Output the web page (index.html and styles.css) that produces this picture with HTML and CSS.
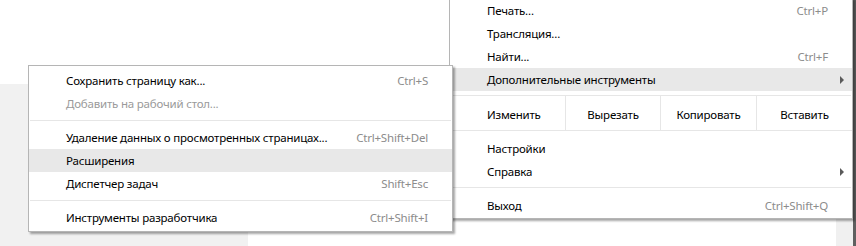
FILE: index.html
```html
<!DOCTYPE html>
<html lang="ru">
<head>
    <meta charset="UTF-8">
    <title>Меню</title>
    <link rel="stylesheet" href="styles.css">
</head>
<body>
<div class="page">
    <div class="side-panel"></div>
    <div class="content"></div>
    <div class="scroll-track"></div>
    <div class="scroll-edge"></div>
</div>

<div class="menu main-menu">
    <div class="item"><span class="label">Печать...</span><span class="shortcut">Ctrl+P</span></div>
    <div class="item"><span class="label">Трансляция...</span></div>
    <div class="item"><span class="label">Найти...</span><span class="shortcut">Ctrl+F</span></div>
    <div class="item active has-sub"><span class="label">Дополнительные инструменты</span><span class="arrow"></span></div>
    <div class="divider"></div>
    <div class="edit-row">
        <div class="edit-cell first">Изменить</div>
        <div class="edit-cell">Вырезать</div>
        <div class="edit-cell">Копировать</div>
        <div class="edit-cell">Вставить</div>
    </div>
    <div class="item"><span class="label">Настройки</span></div>
    <div class="item has-sub"><span class="label">Справка</span><span class="arrow"></span></div>
    <div class="divider"></div>
    <div class="item"><span class="label">Выход</span><span class="shortcut">Ctrl+Shift+Q</span></div>
</div>

<div class="menu sub-menu">
    <div class="item"><span class="label">Сохранить страницу как...</span><span class="shortcut">Ctrl+S</span></div>
    <div class="item disabled"><span class="label">Добавить на рабочий стол...</span></div>
    <div class="divider"></div>
    <div class="item"><span class="label">Удаление данных о просмотренных страницах...</span><span class="shortcut">Ctrl+Shift+Del</span></div>
    <div class="item active"><span class="label">Расширения</span></div>
    <div class="item"><span class="label">Диспетчер задач</span><span class="shortcut">Shift+Esc</span></div>
    <div class="divider"></div>
    <div class="item"><span class="label">Инструменты разработчика</span><span class="shortcut">Ctrl+Shift+I</span></div>
</div>
</body>
</html>
```

FILE: styles.css
```css
body {
    margin: 0;
    padding: 0;
    background-color: #fff;
    font-family: 'Noto Sans', 'Open Sans', sans-serif;
    font-size: 11.5px;
    letter-spacing: -0.2px;
    color: #000;
    overflow: hidden;
}

.page {
    display: grid;
    grid-template-columns: 248px 1fr 17px 3px;
    height: 246px;
}

.side-panel {
    margin-top: 84px;
    background-color: #f1f1f1;
}

.scroll-track {
    margin-top: 200px;
    background-color: #f0f0f0;
}

.scroll-edge {
    background-color: #5f5f5f;
}

.menu {
    position: absolute;
    background-color: #fff;
    border: 1px solid #b5b5b5;
    box-shadow: 2px 2px 2px rgba(0,0,0,0.35);
}

.main-menu {
    left: 449px;
    top: -2px;
    width: 402px;
    padding-bottom: 1px;
}

.sub-menu {
    left: 28px;
    top: 65px;
    width: 423px;
    padding: 3px 0 2px;
    z-index: 2;
}

.item {
    display: flex;
    align-items: center;
    height: 23px;
    padding: 0 24px 0 37px;
}

.item .label {
    flex: 1;
    white-space: nowrap;
}

.item .shortcut {
    color: #8c8c8c;
    white-space: nowrap;
}

.item.active {
    background-color: #e8e8e8;
}

.item.disabled .label {
    color: #9a9a9a;
}

.has-sub {
    position: relative;
}

.arrow {
    position: absolute;
    right: 8px;
    top: 8px;
    width: 0;
    height: 0;
    border-top: 4px solid transparent;
    border-bottom: 4px solid transparent;
    border-left: 4px solid #5a5a5a;
}

.divider {
    height: 1px;
    margin: 5px 1px 5px;
    background-color: #e6e6e6;
}

.main-menu .divider {
    margin: 4px 1px 6px;
}

.main-menu .divider + .edit-row {
    margin-top: -6px;
}

.edit-row {
    display: grid;
    grid-template-columns: 115px 95px 96px 1fr;
    height: 34px;
    border-bottom: 1px solid #e6e6e6;
    margin-bottom: 6px;
}

.edit-cell {
    display: flex;
    align-items: center;
    justify-content: center;
    padding-top: 3px;
    border-left: 1px solid #e6e6e6;
}

.edit-cell.first {
    justify-content: flex-start;
    padding-left: 37px;
    border-left: none;
}
```
